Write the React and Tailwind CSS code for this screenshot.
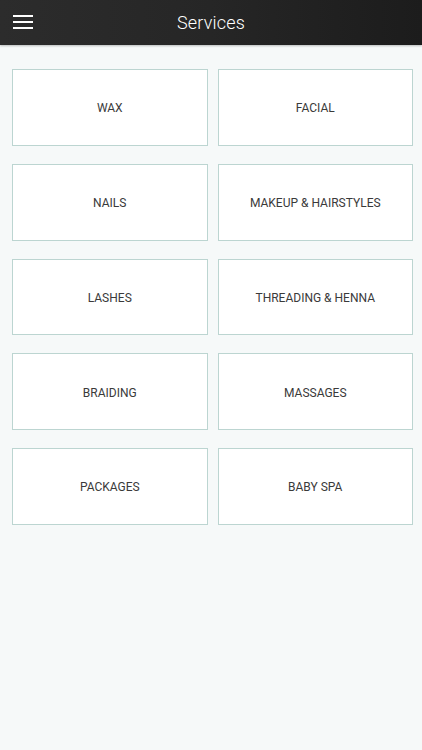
import React from "react";

const services = [
  "WAX",
  "FACIAL",
  "NAILS",
  "MAKEUP & HAIRSTYLES",
  "LASHES",
  "THREADING & HENNA",
  "BRAIDING",
  "MASSAGES",
  "PACKAGES",
  "BABY SPA",
];

const App = () => {
  return (
    <div
      className="min-h-screen w-full bg-[#f6f9f9] flex flex-col"
      style={{ fontFamily: "Roboto, 'Liberation Sans', sans-serif" }}
    >
      <header className="relative h-[45px] flex items-center justify-center bg-gradient-to-r from-[#2c2c2c] via-[#262626] to-[#1c1c1c] shadow-[0_1px_2px_rgba(0,0,0,0.25)]">
        <button className="absolute left-[13px] top-[15px] flex flex-col gap-[4px]">
          <span className="block w-[20px] h-[2px] bg-white" />
          <span className="block w-[20px] h-[2px] bg-white" />
          <span className="block w-[20px] h-[2px] bg-white" />
        </button>
        <h1 className="text-white text-[18px] font-light tracking-[0.2px]">Services</h1>
      </header>

      <main className="pt-[24px] pl-[12px] pr-[9px] grid grid-cols-2 gap-x-[10px] gap-y-[18px]">
        {services.map((name) => (
          <div
            key={name}
            className="h-[76.75px] pt-[2px] bg-white border-[1.5px] border-[#bcd5d1] flex items-center justify-center"
          >
            <span className="text-[12px] text-[#3a3a3a]">{name}</span>
          </div>
        ))}
      </main>
    </div>
  );
};

export default App;
